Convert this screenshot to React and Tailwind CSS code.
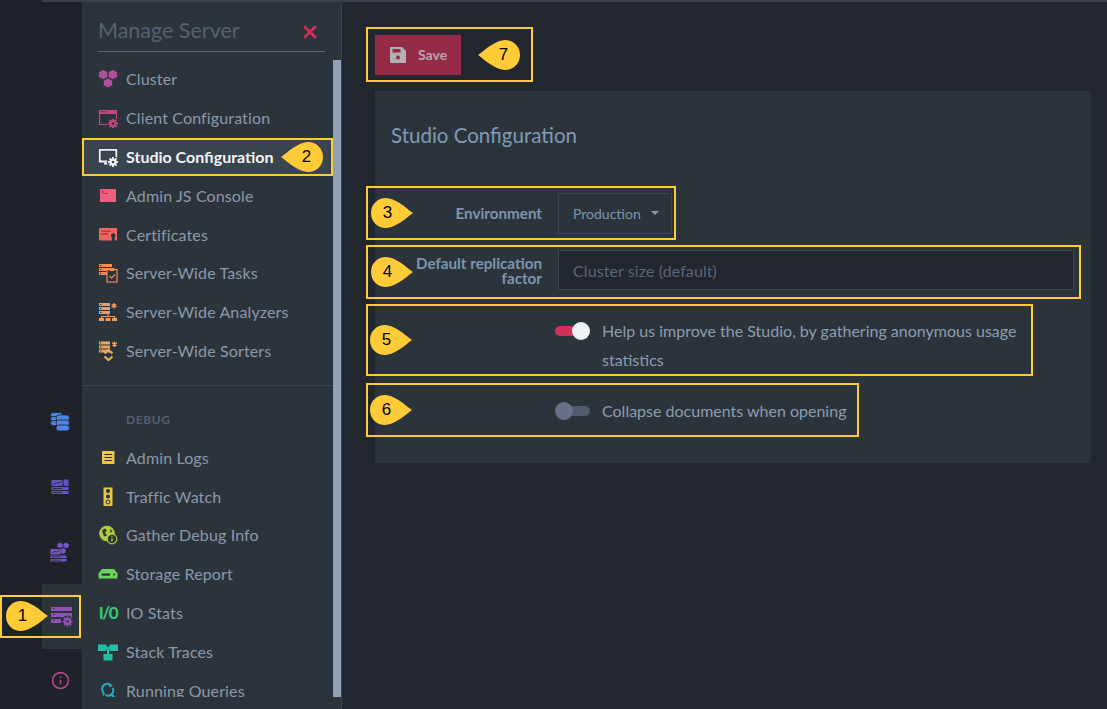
import React from 'react';
import { X, Info } from 'lucide-react';

const teeth = [0, 45, 90, 135];

const Gear = ({ cx, cy, color, bg = '#2c343b' }) => (
  <g>
    <circle cx={cx} cy={cy} r="6" fill={bg} />
    {teeth.map((a) => (
      <rect key={a} x={cx - 0.9} y={cy - 5} width="1.8" height="10" fill={color} transform={`rotate(${a} ${cx} ${cy})`} />
    ))}
    <circle cx={cx} cy={cy} r="3.6" fill={color} />
    <circle cx={cx} cy={cy} r="1.3" fill={bg} />
  </g>
);

const Servers = ({ color, y = 1, w = 10, bg = '#2c343b' }) => (
  <g fill={color}>
    {[0, 4, 8].map((d) => (
      <g key={d}>
        <rect x="1" y={y + d} width={w} height="3" />
        <rect x="2" y={y + d + 1} width="1.5" height="1" fill={bg} />
      </g>
    ))}
  </g>
);

const Icon = ({ children, size = 20 }) => (
  <svg width={size} height={size} viewBox="0 0 20 20" className="shrink-0">{children}</svg>
);

const icons = {
  cluster: (
    <Icon>
      <g fill="#b0509c">
        <path d="M5.2 1l4.200 2.300v4.600l-4.200 2.300L1 7.900V3.300z" />
        <path d="M14.800 1L19 3.300v4.600l-4.200 2.300-4.200-2.300V3.300z" />
        <path d="M10 9.400l4.200 2.300v4.600L10 18.600l-4.200-2.300v-4.600z" />
      </g>
    </Icon>
  ),
  client: (
    <Icon>
      <path d="M1.500 2.500h17v9M1.500 2.500v14h9" fill="none" stroke="#c2487f" strokeWidth="1.200" />
      <rect x="1.500" y="2.500" width="17" height="3.500" fill="#c2487f" />
      <path d="M3 3.700h1.200M5.200 3.700h1.200M7.400 3.700h1.200" stroke="#2c343b" strokeWidth="1" />
      <Gear cx="15" cy="15.500" color="#c2487f" />
    </Icon>
  ),
  studio: (
    <Icon>
      <path d="M10 14.500H1.800V2.800h16.500V11" fill="none" stroke="#eef1f5" strokeWidth="1.800" />
      <rect x="6" y="15.500" width="4.500" height="2" fill="#eef1f5" />
      <Gear cx="15" cy="15" color="#eef1f5" bg="#3a444f" />
    </Icon>
  ),
  console: (
    <Icon>
      <rect x="2" y="3" width="16" height="13" fill="#ee5f7f" />
      <path d="M3.500 4.500l2 1.500-2 1.500M6.500 7.500h3" stroke="#8a3048" strokeWidth=".9" fill="none" />
    </Icon>
  ),
  cert: (
    <Icon>
      <rect x="1" y="3" width="18" height="12.500" rx="1" fill="#f0665e" />
      <path d="M3 6.200h10M3 9h7" stroke="#a83a3a" strokeWidth="1.300" />
      <path d="M13.800 11h2.800v6h-2.800z" fill="#2c343b" />
      <circle cx="15.200" cy="10.500" r="2.200" fill="#2c343b" />
    </Icon>
  ),
  tasks: (
    <Icon>
      <Servers color="#ef8a5a" w={13} />
      <rect x="9" y="6.500" width="10" height="12.500" fill="#2c343b" stroke="#ef8a5a" strokeWidth="1.200" />
      <rect x="11.500" y="5" width="5" height="3" fill="#ef8a5a" />
      <path d="M11.500 13l2 2 3.500-3.500" fill="none" stroke="#ef8a5a" strokeWidth="1.200" />
    </Icon>
  ),
  analyzers: (
    <Icon>
      <Servers color="#ee9a5a" w={11} />
      <path d="M16 1v5.500M13.600 2.400l4.800 2.700M18.400 2.400l-4.800 2.700" stroke="#ee9a5a" strokeWidth="1.400" />
      <path d="M10 12v2.500M3.500 16.500v-2h13v2" stroke="#ee9a5a" strokeWidth="1.200" fill="none" />
      <g fill="#ee9a5a">
        <rect x="1" y="16" width="5" height="3" />
        <rect x="7.500" y="16" width="5" height="3" />
        <rect x="14" y="16" width="5" height="3" />
      </g>
    </Icon>
  ),
  sorters: (
    <Icon>
      <Servers color="#eda85a" w={11} y={0.5} />
      <path d="M16.500.5V6M14.100 1.900l4.800 2.700M18.900 1.900l-4.800 2.700" stroke="#eda85a" strokeWidth="1.400" />
      <path d="M6.500 12.500l4-3.500 4 3.500M6.500 15.500l4 3.500 4-3.500" fill="none" stroke="#eda85a" strokeWidth="2.200" />
    </Icon>
  ),
  logs: (
    <Icon>
      <rect x="4" y="3" width="12.500" height="13" rx="1" fill="#eec25a" />
      <path d="M6.500 6.500h7.500M6.500 9.500h7.500M6.500 12.500h7.500" stroke="#2c343b" strokeWidth="1.200" />
    </Icon>
  ),
  traffic: (
    <Icon>
      <rect x="5.500" y="0.500" width="9" height="18.500" fill="#e8c24a" />
      <circle cx="10" cy="4" r="2" fill="#2c343b" />
      <circle cx="10" cy="9.500" r="2" fill="#2c343b" />
      <circle cx="10" cy="15" r="2" fill="none" stroke="#2c343b" strokeWidth="1" />
    </Icon>
  ),
  debug: (
    <Icon>
      <circle cx="9" cy="8.500" r="7.800" fill="#b3cc3e" />
      <path d="M4 5.500l3-2 2 2-2 2 2 3-3 1zM12 4l2.500 2-2 2z" fill="#2c343b" />
      <circle cx="14" cy="14" r="4.800" fill="#2c343b" stroke="#b3cc3e" strokeWidth="1.200" />
      <path d="M14 13.200v3.200M14 11.200v1" stroke="#b3cc3e" strokeWidth="1.400" />
    </Icon>
  ),
  storage: (
    <Icon>
      <path d="M4 5h12l3.500 4.500v5H.5v-5z" fill="#6dd35f" />
      <rect x="3.500" y="9.500" width="8.500" height="2.200" fill="#2c343b" />
      <circle cx="16" cy="10.500" r="1" fill="#2c343b" />
    </Icon>
  ),
  io: <span className="w-5 shrink-0 text-center text-[17px] leading-none font-bold tracking-[-1.5px] text-[#3ec97a]">I/0</span>,
  stack: (
    <Icon>
      <g fill="#22bfa5">
        <rect x="0" y="2.500" width="8.500" height="6.500" />
        <rect x="11.500" y="2.500" width="8.500" height="6.500" />
        <rect x="5.500" y="12" width="9" height="6.500" />
        <path d="M8 4.500h4v2.500H8zM9 7h2v5H9z" />
      </g>
    </Icon>
  ),
  queries: (
    <Icon>
      <path d="M5.500 11.500A5 5 0 0 1 13 4.500M14.500 7A5 5 0 0 1 7.500 13.800" fill="none" stroke="#2aa8cc" strokeWidth="2" />
      <path d="M11.500 2l3.500 3-4 1.200zM5 15l-1-4 3.500 1.500z" fill="#2aa8cc" />
      <path d="M12.500 12.500l4 4" stroke="#2aa8cc" strokeWidth="2.200" />
    </Icon>
  ),
};

const topItems = [
  ['cluster', 'Cluster'],
  ['client', 'Client Configuration'],
  ['studio', 'Studio Configuration'],
  ['console', 'Admin JS Console'],
  ['cert', 'Certificates'],
  ['tasks', 'Server-Wide Tasks'],
  ['analyzers', 'Server-Wide Analyzers'],
  ['sorters', 'Server-Wide Sorters'],
];

const debugItems = [
  ['logs', 'Admin Logs'],
  ['traffic', 'Traffic Watch'],
  ['debug', 'Gather Debug Info'],
  ['storage', 'Storage Report'],
  ['io', 'IO Stats'],
  ['stack', 'Stack Traces'],
  ['queries', 'Running Queries'],
];

// yellow numbered teardrop, dir is where the tip points
const Callout = ({ n, dir = 'right', className }) => (
  <div className={`absolute h-[30px] w-[42px] font-normal ${className}`}>
    <svg width="42" height="30" viewBox="0 0 42 30" className={dir === 'left' ? '-scale-x-100' : ''}>
      <path d="M0 15C0 6 7 0 15 0c9 0 19 9 27 15-8 6-18 15-27 15C7 30 0 24 0 15z" fill="#ffcb36" />
    </svg>
    <span className={`absolute top-0 flex h-[30px] w-[33px] items-center justify-center text-[17px] text-black [font-family:'Liberation_Sans',sans-serif] ${dir === 'left' ? 'right-0' : 'left-0'}`}>
      {n}
    </span>
  </div>
);

const MenuItem = ({ icon, label }) => {
  const active = label === 'Studio Configuration';
  return (
    <div className={`relative flex h-[38.8px] shrink-0 items-center gap-[8px] text-[16px] ${active ? 'border-2 border-[#ffcb36] bg-[#3a444f] pl-[14px] font-bold text-[#f2f4f7]' : 'pl-[16px] tracking-[0.13px] text-[#8a98a8]'}`}>
      {icons[icon]}
      <span>{label}</span>
      {active && <Callout n="2" dir="left" className="right-[8px] top-[2px]" />}
    </div>
  );
};

const Toggle = ({ on }) => (
  <div className="relative mt-[1px] h-[10px] w-[35px] shrink-0">
    <div className={`h-[10px] w-[35px] rounded-full ${on ? 'bg-[#d42e5a]' : 'bg-[#4f5a6c]'}`} />
    <div className={`absolute top-[-4px] h-[18px] w-[18px] rounded-full ${on ? 'right-0 bg-[#f0f3f7]' : 'left-0 bg-[#667187]'}`} />
  </div>
);

export default function App() {
  return (
    <div className="flex h-[709px] w-[1107px] flex-col overflow-hidden bg-[#1f2329] [font-family:Lato,sans-serif]">
      <div className="ml-[42px] h-[2px] shrink-0 bg-[#3a3f4b]" />
      <div className="flex min-h-0 flex-1">
        <div className="flex w-[82px] shrink-0 flex-col items-end">
          <div className="flex h-[582px] w-[40px] flex-col items-center pr-[4px]">
            <div className="mt-[410px]">
              <svg width="20" height="20" viewBox="0 0 20 20">
                <g fill="#4a86e8" stroke="#1f2329" strokeWidth=".8">
                  <rect x="0.500" y="0.500" width="12" height="5" rx="2.500" />
                  <rect x="0.500" y="4.500" width="12" height="5" rx="2.500" />
                  <rect x="0.500" y="8.500" width="12" height="5" rx="2.500" />
                  <rect x="6" y="3" width="13.500" height="6" rx="3" />
                  <rect x="6" y="8" width="13.500" height="6" rx="3" />
                  <rect x="6" y="13" width="13.500" height="6" rx="3" />
                </g>
              </svg>
            </div>
            <div className="mt-[47px]">
              <svg width="18" height="16" viewBox="0 0 18 16">
                <g fill="#5f55c6">
                  <rect x="0.500" y="1" width="11" height="6" />
                  <rect x="12.500" y="0.500" width="5" height="6.500" />
                  <rect x="0.500" y="8" width="17" height="3" />
                  <rect x="0.500" y="12" width="17" height="3" />
                </g>
                <path d="M2 5.500l3-1.500 2 .5 3-2M14 8.500v-2M2 9.500h9M2 13.500h9" stroke="#1f2329" strokeWidth=".8" fill="none" />
              </svg>
            </div>
            <div className="mt-[47px]">
              <svg width="20" height="20" viewBox="0 0 20 20">
                <g fill="#7355c8">
                  <rect x="0.500" y="7" width="10" height="5.500" />
                  <rect x="0.500" y="13.500" width="16" height="2.500" />
                  <rect x="0.500" y="17" width="16" height="2.500" />
                  <path d="M10 .5l2.600 1.400v3L10 6.300 7.400 4.900v-3zM16 .5l2.800 1.400v3L16 6.300l-2.600-1.400v-3zM13 6l2.800 1.500v3L13 12l-2.500-1.500v-3z" />
                </g>
                <path d="M2 11l3-1.500 2 .5 2.500-2M2 14.700h9M2 18.200h9" stroke="#1f2329" strokeWidth=".7" fill="none" />
              </svg>
            </div>
          </div>
          <div className="relative flex h-[65px] w-[40px] items-center justify-center bg-[#2c343b]">
            <svg width="22" height="21" viewBox="0 0 22 21">
              <g fill="#8f51b5">
                <rect x="0" y="1" width="21" height="4" />
                <rect x="0" y="7" width="21" height="4" />
                <rect x="0" y="13" width="10" height="4" />
              </g>
              <path d="M2 2.500h1.500M2 8.500h1.500M2 14.500h1.500" stroke="#2c343b" strokeWidth="1" />
              <Gear cx="16.500" cy="15.500" color="#8f51b5" />
            </svg>
            <div className="absolute left-[-42px] top-[11px] h-[43px] w-[81px] border-2 border-[#ffcb36]">
              <Callout n="1" className="left-[4px] top-[4px]" />
            </div>
          </div>
          <div className="flex w-[40px] flex-1 items-start justify-center pr-[4px] pt-[22px]">
            <Info size={19} color="#b04a90" strokeWidth={2} />
          </div>
        </div>

        <div className="flex w-[260px] shrink-0 flex-col border-r border-[#3a444f] bg-[#2c343b]">
          <div className="mx-[16px] flex h-[50px] shrink-0 items-center justify-between border-b border-[#5a6470] pr-[5px] pt-[8px]">
            <span className="text-[21.5px] text-[#54606f]">Manage Server</span>
            <X size={20} color="#d42e5a" strokeWidth={3.5} className="mt-[2px]" />
          </div>
          <div className="mt-[8px] flex h-[637px] shrink-0 overflow-hidden">
            <div className="flex w-[251px] flex-col">
              {topItems.map(([icon, label]) => (
                <MenuItem key={label} icon={icon} label={label} />
              ))}
              <div className="mt-[15px] h-[1px] shrink-0 bg-[#3a444f]" />
              <div className="flex h-[52px] shrink-0 items-center pl-[44px] pt-[15px] text-[12px] font-bold tracking-[0.6px] text-[#54606f]">DEBUG</div>
              {debugItems.map(([icon, label]) => (
                <MenuItem key={label} icon={icon} label={label} />
              ))}
            </div>
            <div className="h-full w-[8px] bg-[#8fa1b5]" />
          </div>
        </div>

        <div className="min-w-0 flex-1 bg-[#22262e] pl-[24px] pt-[25px]">
          <div className="flex h-[55px] w-[167px] items-center border-2 border-[#ffcb36] pl-[7px]">
            <button className="flex h-[40px] w-[86px] items-center gap-[12px] bg-[#962b47] pl-[15px] text-[14px] font-bold text-[#b8a7ae]">
              <svg width="16" height="16" viewBox="0 0 16 16" className="shrink-0">
                <path d="M1 0h11l4 4v11a1 1 0 0 1-1 1H1a1 1 0 0 1-1-1V1a1 1 0 0 1 1-1z" fill="#b0b0b3" />
                <rect x="2.500" y="2" width="8" height="3.500" fill="#962b47" />
                <circle cx="8" cy="10.500" r="2" fill="#962b47" />
              </svg>
              Save
            </button>
            <div className="relative h-[30px] flex-1">
              <Callout n="7" dir="left" className="left-[17px] top-0" />
            </div>
          </div>

          <div className="ml-[9px] mt-[9px] h-[372px] w-[716px] bg-[#2c343b]">
            <h1 className="pl-[16px] pt-[31px] text-[20.5px] leading-[26px] text-[#7f9ab5]">Studio Configuration</h1>

            <div className="relative ml-[-9px] mt-[38px] flex h-[54px] w-[310px] items-center border-2 border-[#ffcb36]">
              <Callout n="3" className="left-[3px] top-[10px]" />
              <label className="w-[174px] text-right text-[15.2px] font-bold text-[#7d95ab]">Environment</label>
              <div className="ml-[16px] flex h-[41px] w-[114px] items-center gap-[10px] border border-[#3a4551] pl-[14px] text-[14px] text-[#7d95ab]">
                Production
                <span className="h-0 w-0 border-x-[4px] border-t-[4px] border-x-transparent border-t-[#8a98a8]" />
              </div>
            </div>

            <div className="relative ml-[-9px] mt-[5px] flex h-[54px] w-[715px] items-start border-2 border-[#ffcb36]">
              <Callout n="4" className="left-[3px] top-[10px]" />
              <label className="mt-[9px] w-[174px] pl-[44px] text-right text-[15.2px] font-bold leading-[15px] text-[#7d95ab]">Default replication factor</label>
              <input
                readOnly
                placeholder="Cluster size (default)"
                className="ml-[16px] mt-[3px] h-[40px] w-[516px] border border-[#3a4551] bg-[#22262e] pl-[14px] text-[16px] tracking-[0.1px] outline-none placeholder:text-[#5a6576]"
              />
            </div>

            <div className="relative ml-[-9px] mt-[5px] flex h-[72px] w-[667px] items-start border-2 border-[#ffcb36] pl-[187px] pt-[10px]">
              <Callout n="5" className="left-[2px] top-[19px]" />
              <div className="mt-[9px]"><Toggle on /></div>
              <p className="ml-[12px] w-[430px] text-[16px] leading-[29px] text-[#8a9cb0]">Help us improve the Studio, by gathering anonymous usage statistics</p>
            </div>

            <div className="relative ml-[-9px] mt-[7px] flex h-[54px] w-[493px] items-center border-2 border-[#ffcb36] pl-[187px]">
              <Callout n="6" className="left-[2px] top-[10px]" />
              <Toggle />
              <span className="ml-[12px] mt-[1px] text-[16px] text-[#8a9cb0]">Collapse documents when opening</span>
            </div>
          </div>
        </div>
      </div>
    </div>
  );
}
